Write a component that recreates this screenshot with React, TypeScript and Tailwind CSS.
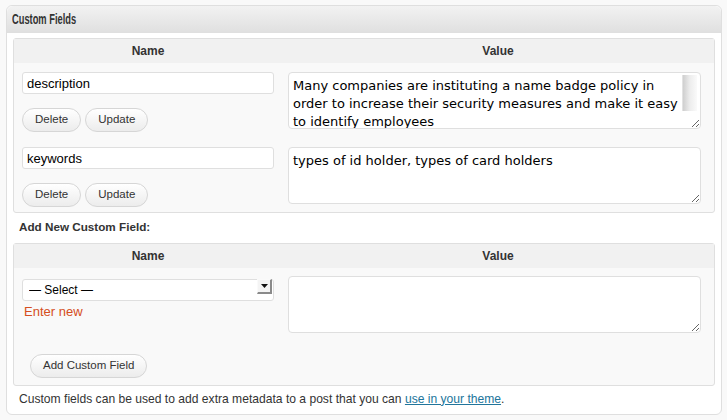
import { useState } from "react";

const ui = "font-['Liberation_Sans',Arial,sans-serif]";
const area = "font-['DejaVu_Sans','Liberation_Sans',sans-serif]";

function PillButton({ label }: { label: string }) {
    return (
        <button
            type="button"
            className={`h-[24px] px-[12px] rounded-full border border-[#d6d6d6] bg-gradient-to-b from-[#ffffff] to-[#ececec] text-[11.5px] text-[#333] ${ui}`}
        >
            {label}
        </button>
    );
}

function ResizeTextarea({ value, scroll }: { value: string; scroll?: boolean }) {
    return (
        <div className="relative ml-[14px] w-[413px] h-[57px]">
            <textarea
                readOnly
                wrap="off"
                value={value}
                className={`w-full h-full border border-[#dfdfdf] rounded-[4px] bg-white px-[4px] py-[4px] text-[13px] leading-[18px] text-black overflow-hidden resize focus:outline-none ${area}`}
            />
            {scroll && (
                <div className="absolute right-[4px] top-[3px] w-[15px] h-[36px] bg-gradient-to-r from-[#cfcfcf] via-[#ededed] to-[#fafafa] border-l border-[#e2e2e2]" />
            )}
        </div>
    );
}

function FieldRow({ name, value, scroll }: { name: string; value: string; scroll?: boolean }) {
    return (
        <div className="flex flex-row">
            <div className="flex flex-col ml-[8px] w-[252px]">
                <input
                    readOnly
                    value={name}
                    className={`h-[22px] w-full border border-[#dfdfdf] rounded-[3px] bg-white px-[4px] text-[13px] text-black focus:outline-none ${ui}`}
                />
                <div className="flex flex-row gap-[4px] mt-[14px]">
                    <PillButton label="Delete" />
                    <PillButton label="Update" />
                </div>
            </div>
            <ResizeTextarea value={value} scroll={scroll} />
        </div>
    );
}

function TableHead() {
    return (
        <div className={`flex flex-row h-[24px] items-center bg-[#f1f1f1] text-[12px] font-bold text-[#333] ${ui}`}>
            <div className="w-[268px] text-center">Name</div>
            <div className="flex-1 text-center">Value</div>
        </div>
    );
}

export default function App() {
    const [selected, setSelected] = useState<string>("");

    return (
        <div className="w-[727px] h-[420px] bg-[#f9f9f9] pt-[5px] pl-[6px]">
            <div className="w-[716px] h-[410px] border border-[#dfdfdf] rounded-[6px] bg-white flex flex-col">
                <div className="h-[27px] rounded-t-[6px] border-b border-[#dfdfdf] bg-gradient-to-b from-[#f2f2f2] to-[#e0e0e0] flex items-center pl-[5px]">
                    <h3 className={`text-[15px] font-bold text-[#333] origin-left scale-x-[0.62] whitespace-nowrap ${ui}`}>
                        Custom Fields
                    </h3>
                </div>

                <div className="flex flex-col px-[6px] pt-[5px]">
                    <div className="w-[702px] border border-[#dfdfdf] rounded-[3px] bg-[#f9f9f9] pb-[5px]">
                        <TableHead />
                        <div className="flex flex-col pt-[9px] gap-[15px]">
                            <FieldRow
                                name="description"
                                value={"Many companies are instituting a name badge policy in\norder to increase their security measures and make it easy\nto identify employees"}
                                scroll
                            />
                            <FieldRow name="keywords" value="types of id holder, types of card holders" />
                        </div>
                    </div>

                    <p className={`mt-[6px] pl-[6px] h-[16px] leading-[16px] text-[11.7px] font-bold text-[#333] ${ui}`}>
                        Add New Custom Field:
                    </p>

                    <div className="mt-[8px] w-[702px] border border-[#dfdfdf] rounded-[3px] bg-[#f9f9f9] pb-[7px]">
                        <TableHead />
                        <div className="flex flex-row pt-[8px]">
                            <div className="flex flex-col ml-[8px] w-[252px]">
                                <div className="relative h-[22px]">
                                    <select
                                        value={selected}
                                        onChange={(e) => setSelected(e.target.value)}
                                        className={`appearance-none h-[22px] w-full border border-[#dfdfdf] rounded-[3px] bg-white pl-[6px] text-[12px] text-black focus:outline-none ${ui}`}
                                    >
                                        <option value="">— Select —</option>
                                        <option value="description">description</option>
                                        <option value="keywords">keywords</option>
                                    </select>
                                    <div className="pointer-events-none absolute right-[2px] top-[3px] w-[15px] h-[15px] bg-[#f4f4f4] border-t border-l border-[#fafafa] border-r-2 border-b-2 border-r-[#8a8a8a] border-b-[#8a8a8a] flex items-center justify-center">
                                        <svg width="7" height="4" viewBox="0 0 7 4">
                                            <path d="M0 0h7L3.5 4z" fill="#111" />
                                        </svg>
                                    </div>
                                </div>
                                <a className={`mt-[6px] ml-[2px] h-[16px] leading-[16px] text-[13px] text-[#d54e21] cursor-pointer ${ui}`}>
                                    Enter new
                                </a>
                            </div>
                            <ResizeTextarea value="" />
                        </div>
                        <div className="ml-[16px] mt-[18px]">
                            <PillButton label="Add Custom Field" />
                        </div>
                    </div>

                    <p className={`mt-[5px] pl-[6px] h-[16px] leading-[16px] text-[12.1px] text-[#333] ${ui}`}>
                        Custom fields can be used to add extra metadata to a post that you can{" "}
                        <a className="text-[#21759b] underline cursor-pointer">use in your theme</a>.
                    </p>
                </div>
            </div>
        </div>
    );
}
